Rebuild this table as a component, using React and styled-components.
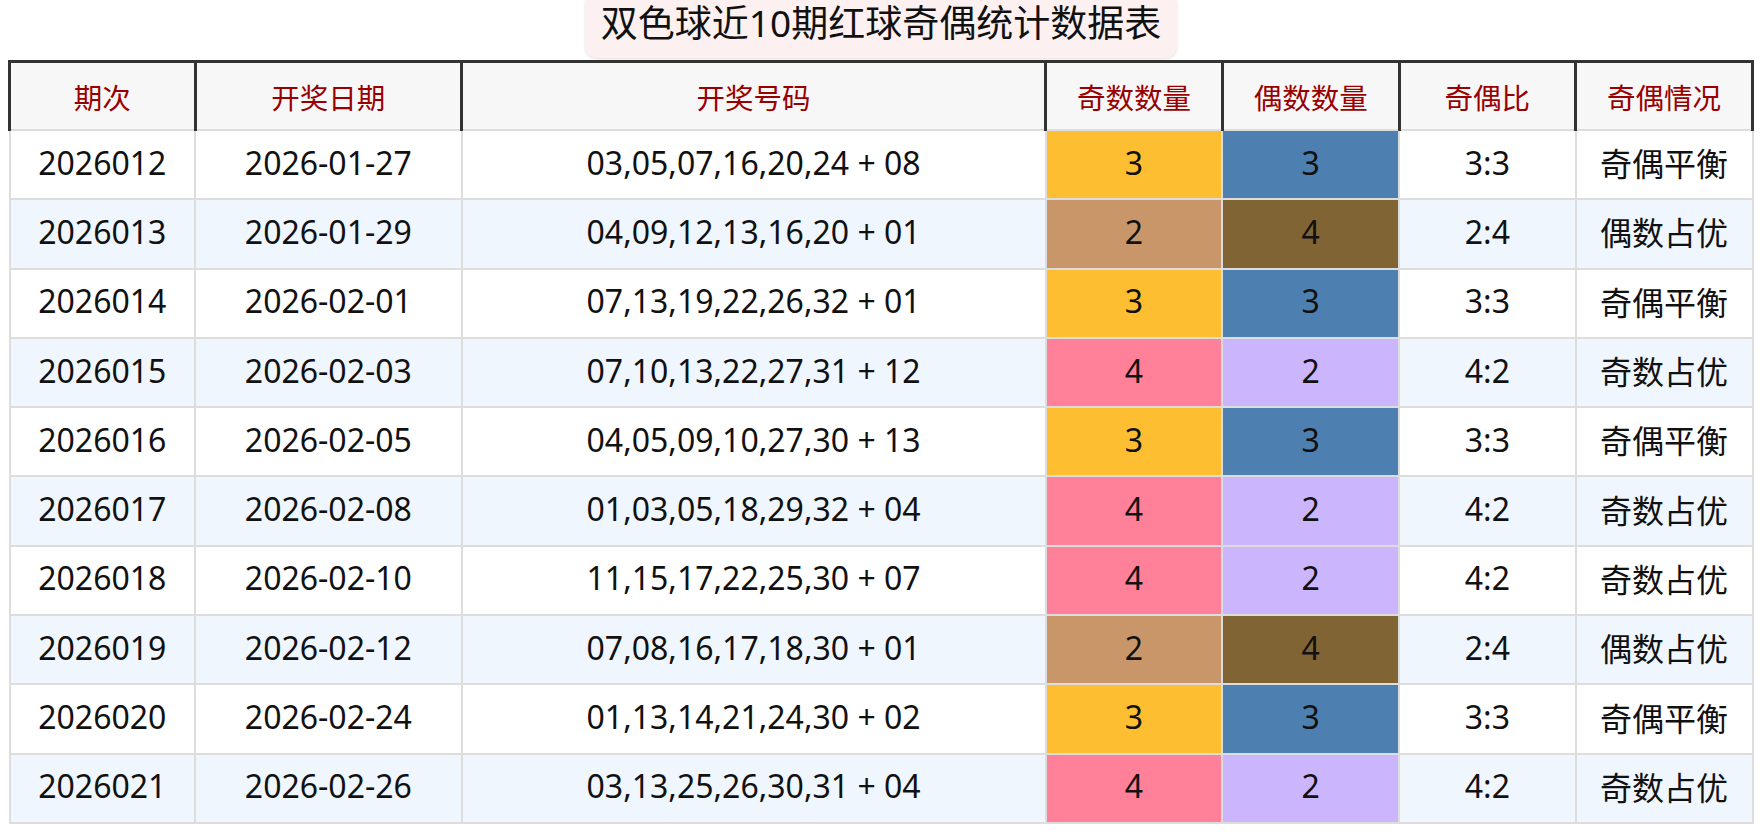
import React from 'react'
import styled, { createGlobalStyle } from 'styled-components'

const GlobalStyle = createGlobalStyle`
    body {
        margin: 0;
        background: #fff;
        font-family: "Noto Sans", "Noto Sans CJK SC", sans-serif;
    }
`

const draws = [
    ['2026012', '2026-01-27', [3, 5, 7, 16, 20, 24], 8],
    ['2026013', '2026-01-29', [4, 9, 12, 13, 16, 20], 1],
    ['2026014', '2026-02-01', [7, 13, 19, 22, 26, 32], 1],
    ['2026015', '2026-02-03', [7, 10, 13, 22, 27, 31], 12],
    ['2026016', '2026-02-05', [4, 5, 9, 10, 27, 30], 13],
    ['2026017', '2026-02-08', [1, 3, 5, 18, 29, 32], 4],
    ['2026018', '2026-02-10', [11, 15, 17, 22, 25, 30], 7],
    ['2026019', '2026-02-12', [7, 8, 16, 17, 18, 30], 1],
    ['2026020', '2026-02-24', [1, 13, 14, 21, 24, 30], 2],
    ['2026021', '2026-02-26', [3, 13, 25, 26, 30, 31], 4],
]

const oddColors = { 2: '#c99669', 3: '#fdbe31', 4: '#ff8099' }
const evenColors = { 2: '#cbb5fd', 3: '#4d80b0', 4: '#806433' }

const pad = n => String(n).padStart(2, '0')

const verdict = (odd, even) => {
    if (odd === even) return '奇偶平衡'
    return odd > even ? '奇数占优' : '偶数占优'
}

const App = () => {
    return (
        <Page>
            <GlobalStyle />
            <TitleRow>
                <Title>双色球近10期红球奇偶统计数据表</Title>
            </TitleRow>
            <Table>
                <colgroup>
                    <col style={{ width: '10.65%' }} />
                    <col style={{ width: '15.29%' }} />
                    <col style={{ width: '33.5%' }} />
                    <col style={{ width: '10.14%' }} />
                    <col style={{ width: '10.14%' }} />
                    <col style={{ width: '10.14%' }} />
                    <col style={{ width: '10.14%' }} />
                </colgroup>
                <thead>
                    <tr>
                        <Th>期次</Th>
                        <Th>开奖日期</Th>
                        <Th>开奖号码</Th>
                        <Th>奇数数量</Th>
                        <Th>偶数数量</Th>
                        <Th>奇偶比</Th>
                        <Th>奇偶情况</Th>
                    </tr>
                </thead>
                <tbody>
                    {draws.map(([issue, date, reds, blue]) => {
                        const odd = reds.filter(n => n % 2 === 1).length
                        const even = reds.length - odd
                        return (
                            <Row key={issue}>
                                <Td>{issue}</Td>
                                <Td>{date}</Td>
                                <Td>{reds.map(pad).join(',')} + {pad(blue)}</Td>
                                <Td $bg={oddColors[odd]}>{odd}</Td>
                                <Td $bg={evenColors[even]}>{even}</Td>
                                <Td>{odd}:{even}</Td>
                                <Td>{verdict(odd, even)}</Td>
                            </Row>
                        )
                    })}
                </tbody>
            </Table>
        </Page>
    )
}

const Page = styled.div`
    padding: 0 8px 8px;
`

const TitleRow = styled.div`
    display: flex;
    justify-content: center;
`

const Title = styled.h1`
    margin: 0;
    padding: 0 16px 12px;
    font-size: 37px;
    font-weight: 400;
    line-height: 46px;
    color: #111;
    background: #fdf0f0;
    border-radius: 0 0 12px 12px;
    box-shadow: 0 1px 3px rgba(0, 0, 0, 0.12);
`

const Table = styled.table`
    width: 100%;
    margin-top: 2px;
    border-collapse: collapse;
    table-layout: fixed;
`

const Th = styled.th`
    height: 66px;
    padding: 0 6px;
    font-size: 28.5px;
    font-weight: 400;
    color: #990000;
    background: #f7f7f7;
    border: 3px solid #333;
    border-bottom: 2px solid #ddd;
    text-align: center;
`

const Row = styled.tr`
    background: #fff;

    &:nth-child(even) {
        background: #eff6fe;
    }
`

const Td = styled.td`
    height: 62.3px;
    padding: 0 6px 5px;
    font-size: 32px;
    color: #111;
    text-align: center;
    border: 2px solid #ddd;
    background: ${p => p.$bg || 'transparent'};
    white-space: nowrap;
`

export default App
